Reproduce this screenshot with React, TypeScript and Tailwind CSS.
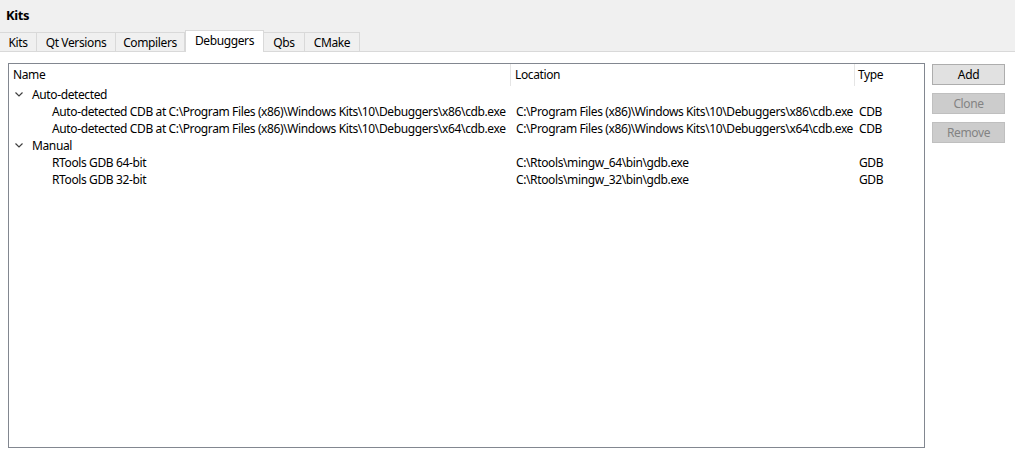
const tabs = ['Kits', 'Qt Versions', 'Compilers', 'Debuggers', 'Qbs', 'CMake']
const tabWidths = ['w-[37px]', 'w-[79px]', 'w-[69px]', 'w-[79px]', 'w-[41px]', 'w-[55px]']

type Row = { name: string; location: string; type: string }

const groups: { title: string; rows: Row[] }[] = [
  {
    title: 'Auto-detected',
    rows: [
      {
        name: 'Auto-detected CDB at C:\\Program Files (x86)\\Windows Kits\\10\\Debuggers\\x86\\cdb.exe',
        location: 'C:\\Program Files (x86)\\Windows Kits\\10\\Debuggers\\x86\\cdb.exe',
        type: 'CDB',
      },
      {
        name: 'Auto-detected CDB at C:\\Program Files (x86)\\Windows Kits\\10\\Debuggers\\x64\\cdb.exe',
        location: 'C:\\Program Files (x86)\\Windows Kits\\10\\Debuggers\\x64\\cdb.exe',
        type: 'CDB',
      },
    ],
  },
  {
    title: 'Manual',
    rows: [
      { name: 'RTools GDB 64-bit', location: 'C:\\Rtools\\mingw_64\\bin\\gdb.exe', type: 'GDB' },
      { name: 'RTools GDB 32-bit', location: 'C:\\Rtools\\mingw_32\\bin\\gdb.exe', type: 'GDB' },
    ],
  },
]

function Chevron() {
  return (
    <svg className="h-[17px] w-[19px]" viewBox="0 0 19 17" fill="none" stroke="#404040" strokeWidth={1.2}>
      <path d="M5.5 6.5l3.5 3.5 3.5-3.5" />
    </svg>
  )
}

export default function App() {
  return (
    <div className="flex h-[458px] w-[1015px] flex-col bg-white text-[12px] leading-[17px] tracking-[-0.38px] text-black [font-family:'Noto_Sans','Open_Sans',sans-serif]">
      <div className="bg-[#f0f0f0]">
        <div className="h-[31px] pl-[6px] pt-[7px] text-[13px] font-bold">Kits</div>
        <div className="flex h-[21px] items-end border-b border-[#d9d9d9]">
          {tabs.map((t, i) => {
            const active = t === 'Debuggers'
            return (
              <div
                key={t}
                className={`flex items-center justify-center border-t border-r border-[#d9d9d9] ${tabWidths[i]} ${
                  active ? '-mb-px h-[22px] border-l bg-white pb-[2px]' : 'h-[19px] bg-[#f0f0f0]'
                }`}
              >
                {t}
              </div>
            )
          })}
        </div>
      </div>
      <div className="flex flex-1 gap-[7px] pt-[11px] pb-[10px] pl-[8px] pr-[10px]">
        <div className="flex-1 border border-[#828790]">
          <div className="flex h-[22px] items-center">
            <div className="h-full w-[502px] border-r border-[#e5e5e5] pl-[4px] pt-[2px]">Name</div>
            <div className="h-full w-[344px] border-r border-[#e5e5e5] pl-[4px] pt-[2px]">Location</div>
            <div className="h-full w-[68px] pl-[3px] pt-[2px]">Type</div>
          </div>
          <div>
            {groups.map((g) => (
              <div key={g.title}>
                <div className="flex h-[17px] items-center pl-[1px]">
                  <Chevron />
                  <span className="pl-[3px]">{g.title}</span>
                </div>
                {g.rows.map((r) => (
                  <div key={r.name} className="flex h-[17px] whitespace-nowrap">
                    <div className="w-[503px] overflow-hidden pl-[43px]">{r.name}</div>
                    <div className="w-[344px] overflow-hidden pl-[4px]">{r.location}</div>
                    <div className="pl-[3px]">{r.type}</div>
                  </div>
                ))}
              </div>
            ))}
          </div>
        </div>
        <div className="flex w-[73px] flex-col gap-[8px] pt-[1px]">
          <button className="h-[21px] border border-[#adadad] bg-[#e1e1e1] text-black">Add</button>
          <button className="h-[21px] border border-[#bfbfbf] bg-[#cccccc] text-[#838383]">Clone</button>
          <button className="h-[21px] border border-[#bfbfbf] bg-[#cccccc] text-[#838383]">Remove</button>
        </div>
      </div>
    </div>
  )
}
